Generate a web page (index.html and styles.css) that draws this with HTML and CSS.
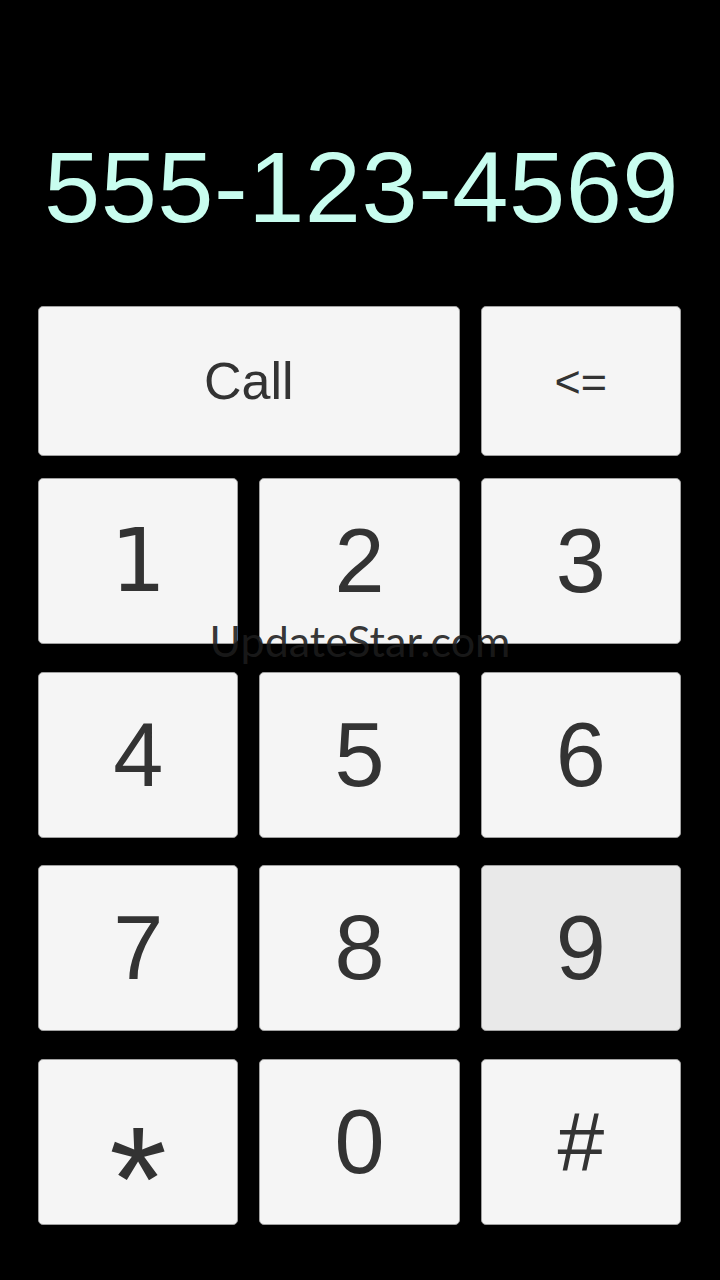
FILE: index.html
```html
<!DOCTYPE html>
<html lang="en">
<head>
    <meta charset="UTF-8">
    <title>Dialer</title>
    <meta name="viewport" content="width=device-width, initial-scale=1">
    <link rel="stylesheet" href="styles.css">
</head>
<body>
<div class="dialer">

    <div class="dialer--display">555-123-4569</div>

    <div class="dialer--actions">
        <button class="key key-call">Call</button>
        <button class="key key-back">&lt;=</button>
    </div>

    <div class="dialer--keys">
        <button class="key"><span class="key-one">1</span></button>
        <button class="key">2</button>
        <button class="key">3</button>
        <button class="key">4</button>
        <button class="key">5</button>
        <button class="key">6</button>
        <button class="key">7</button>
        <button class="key">8</button>
        <button class="key pressed">9</button>
        <button class="key"><span class="key-star">*</span></button>
        <button class="key">0</button>
        <button class="key key-hash">#</button>
    </div>

    <div class="watermark">UpdateStar.com</div>
</div>
</body>
</html>
```

FILE: styles.css
```css
*, *:before, *:after {
    box-sizing: border-box;
    padding: 0;
    margin: 0;
}

body {
    background: #000;
    overflow: hidden;
    font-family: "Liberation Sans", Arial, sans-serif;
}

.dialer {
    width: 720px;
    height: 1280px;
    position: relative;
    padding: 137px 39px 0 38px;
}

.dialer--display {
    font-size: 101px;
    line-height: 100px;
    letter-spacing: 0.5px;
    color: #c8fdef;
    text-align: center;
    margin-bottom: 69px;
    padding-left: 4px;
}

.dialer--actions {
    display: grid;
    grid-template-columns: 1fr 1fr 1fr;
    column-gap: 21px;
    height: 150px;
    margin-bottom: 22px;
}

.dialer--keys {
    display: grid;
    grid-template-columns: 1fr 1fr 1fr;
    grid-template-rows: repeat(4, 166px);
    column-gap: 21px;
    row-gap: 27.6px;
}

.key {
    display: flex;
    align-items: center;
    justify-content: center;
    background: #f5f5f5;
    border: 1px solid #a0a0a0;
    border-radius: 5px;
    color: #333;
    font-family: "Liberation Sans", Arial, sans-serif;
    font-size: 90px;
    line-height: 1;
}

.key:focus {
    outline: 0;
}

.key.pressed {
    background: #e9e9e9;
}

.key-call {
    grid-column: span 2;
    font-size: 52px;
}

.key-back {
    font-size: 45px;
}

.key-hash {
    font-size: 84px;
}

.key-one {
    font-family: "DejaVu Sans", sans-serif;
    font-size: 88px;
}

.key-star {
    font-size: 148px;
    line-height: 1;
    transform: translateY(37px);
}

/* watermark over the keypad */
.watermark {
    position: absolute;
    top: 616px;
    left: 0;
    width: 100%;
    text-align: center;
    font-family: Lato, "Open Sans", sans-serif;
    font-size: 43px;
    line-height: 50px;
    color: rgba(28, 28, 28, 0.9);
    pointer-events: none;
}
```
